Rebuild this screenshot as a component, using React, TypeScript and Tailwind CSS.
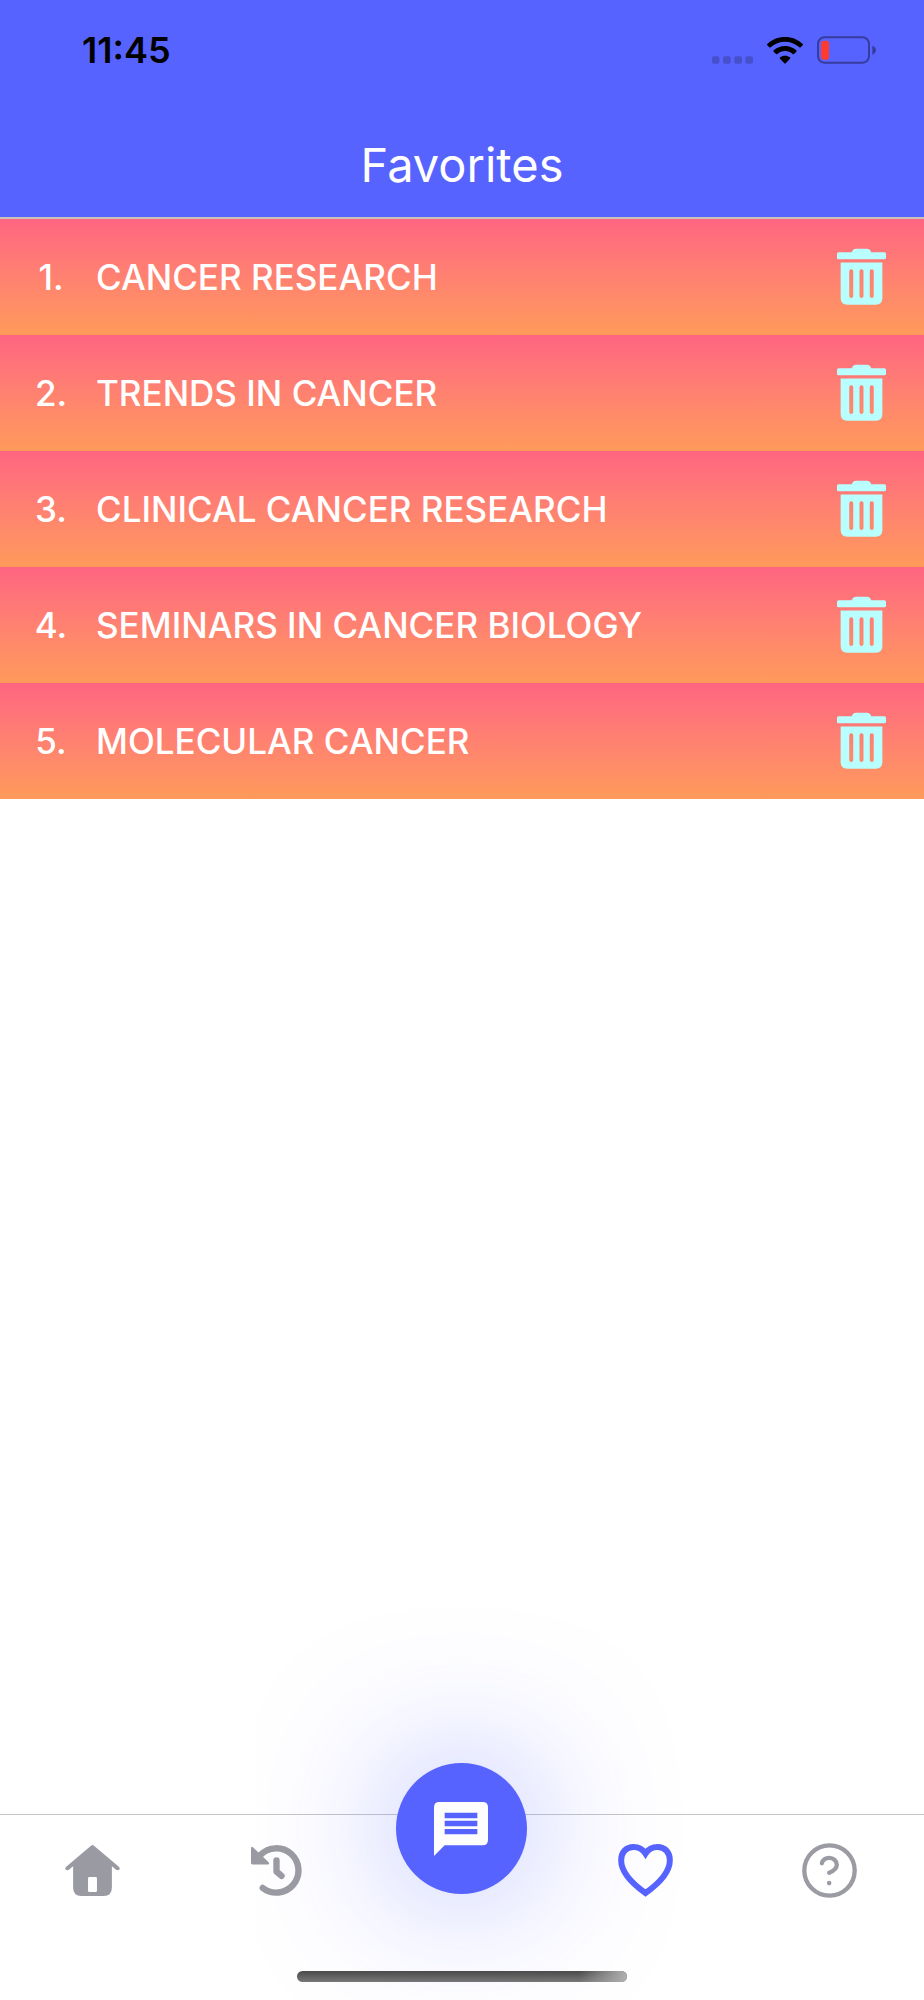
import React from 'react';

const favorites = [
  'CANCER RESEARCH',
  'TRENDS IN CANCER',
  'CLINICAL CANCER RESEARCH',
  'SEMINARS IN CANCER BIOLOGY',
  'MOLECULAR CANCER'
];

const SignalIcon: React.FC = () => (
  <svg aria-hidden="true" viewBox="0 0 123 22" className="w-[41px] h-2 fill-[#4650cb]">
    <rect x="0" width="22" height="22" rx="6" />
    <rect x="33" width="23" height="22" rx="6" />
    <rect x="67" width="23" height="22" rx="6" />
    <rect x="100" width="23" height="22" rx="6" />
  </svg>
);

const WifiIcon: React.FC = () => (
  <svg aria-hidden="true" viewBox="0 0 108 81" className="w-9 h-[27px] fill-black">
    <path d="M54 0C75 0 94 8 107 21Q109 23 107 25L101 31Q99 33 97 31C85 20 70 14 54 14S23 20 11 31Q9 33 7 31L1 25Q-1 23 1 21C14 8 33 0 54 0Z" />
    <path d="M54 27C67 27 79 32 88 40Q90 42 88 44L81 51Q79 53 77 51C71 45 63 42 54 42S37 45 31 51Q29 53 27 51L20 44Q18 42 20 40C29 32 41 27 54 27Z" />
    <path d="M54 56C60 56 65 58 69 61Q71 63 69 65L56 79Q54 81 52 79L39 65Q37 63 39 61C43 58 48 56 54 56Z" />
  </svg>
);

const BatteryIcon: React.FC = () => (
  <svg aria-hidden="true" viewBox="0 0 177 82" className="w-[59px] h-7">
    <rect x="3" y="3" width="153" height="76" rx="19" fill="none" stroke="#363d9c" strokeWidth="6" />
    <rect x="12" y="13" width="24" height="57" rx="9" fill="#ff3b30" />
    <path d="M166 28C173 30 177 35 177 41S173 53 166 55Z" fill="#363d9c" />
  </svg>
);

const TrashIcon: React.FC = () => (
  <svg aria-hidden="true" viewBox="0 0 148 170" className="w-[49px] h-[57px] fill-[#b9ffff]">
    <path d="M5 12H45Q47 1 58 1H90Q101 1 103 12H143Q148 12 148 17V29Q148 33 143 33H5Q0 33 0 29V17Q0 12 5 12Z" />
    <path
      fillRule="evenodd"
      d="M11 43H137V150Q137 170 117 170H31Q11 170 11 150ZM37 69V144A6 6 0 0 0 49 144V69A6 6 0 0 0 37 69ZM68 69V144A6 6 0 0 0 80 144V69A6 6 0 0 0 68 69ZM99 69V144A6 6 0 0 0 111 144V69A6 6 0 0 0 99 69Z"
    />
  </svg>
);

const HomeIcon: React.FC = () => (
  <svg aria-hidden="true" viewBox="0 0 165 154" className="w-[55px] h-[51px] fill-[#9a9aa2]">
    <path
      fillRule="evenodd"
      d="M78 2Q82.500 -2 87 2L162 66Q167 71 163 75Q159 78 154 75L141 64V129Q141 154 116 154H49Q24 154 24 129V64L11 75Q6 78 2 75Q-2 71 3 66ZM73 97Q69 97 69 101V138Q69 142 73 142H92Q96 142 96 138V101Q96 97 92 97Z"
    />
  </svg>
);

const HistoryIcon: React.FC = () => (
  <svg aria-hidden="true" viewBox="0 0 152 152" className="w-[51px] h-[51px]">
    <g fill="none" stroke="#9a9aa2" strokeLinecap="round" strokeLinejoin="round">
      <path d="M28 30A66 66 0 1 1 35 128" strokeWidth="19" />
      <path d="M76 46V79L91 92" strokeWidth="19" />
    </g>
    <path d="M0 10Q0 2 6 7L52 51Q57 58 50 58H4Q0 58 0 54Z" fill="#9a9aa2" />
  </svg>
);

const ChatIcon: React.FC = () => (
  <svg aria-hidden="true" viewBox="0 0 162 162" className="w-[54px] h-[54px]">
    <path
      fill="#fdfdfd"
      fillRule="evenodd"
      d="M16 0H146Q162 0 162 16V114Q162 130 146 130H32L0 162V16Q0 0 16 0ZM32 32V49H130V32ZM32 56V73H130V56ZM32 81V97H130V81Z"
    />
  </svg>
);

const HeartIcon: React.FC = () => (
  <svg aria-hidden="true" viewBox="0 0 165 160" className="w-[55px] h-[53px]">
    <path
      d="M82.500 29C75 17 63 9 46 9C24 9 9 25 9 49C9 88 46 122 82.500 148C119 122 156 88 156 49C156 25 141 9 119 9C102 9 90 17 82.500 29Z"
      fill="none"
      stroke="#5663ff"
      strokeWidth="18"
    />
  </svg>
);

const HelpIcon: React.FC = () => (
  <svg aria-hidden="true" viewBox="0 0 166 166" className="w-[55px] h-[55px]">
    <g fill="none" stroke="#9a9ba3" strokeWidth="13" strokeLinecap="round">
      <circle cx="83" cy="83" r="76" />
      <path d="M60 61C63 51 71 45 82 45C95 45 105 54 105 66C105 80 92 86 82 90" />
    </g>
    <circle cx="82" cy="121" r="7" fill="#9a9ba3" />
  </svg>
);

const tabs = [
  { label: 'Home', icon: <HomeIcon /> },
  { label: 'History', icon: <HistoryIcon /> },
  { label: 'Chat', icon: <ChatIcon />, primary: true },
  { label: 'Favorites', icon: <HeartIcon />, active: true },
  { label: 'Help', icon: <HelpIcon /> }
];

const Header: React.FC = () => (
  <header className="bg-[#5663ff] border-b-2 border-[#c9c3c0]">
    <div className="h-[100px] pl-[82px] pr-12 flex items-center justify-between">
      <time className="text-[36px] leading-10 font-semibold text-black">11:45</time>
      <div className="flex items-center gap-3.5">
        <div className="h-7 flex items-end">
          <SignalIcon />
        </div>
        <WifiIcon />
        <BatteryIcon />
      </div>
    </div>
    <div className="h-[117px] pt-3 flex items-center justify-center">
      <h1 className="text-[47px] leading-14 font-normal text-white">Favorites</h1>
    </div>
  </header>
);

const TabBar: React.FC = () => (
  <footer className="border-t border-[#c6c6c9]">
    <nav aria-label="Main" className="h-[110px] pr-0.5 flex">
      {tabs.map((tab) => (
        <div key={tab.label} className="flex-1 flex justify-center items-center">
          {tab.primary ? (
            <button
              type="button"
              aria-label={tab.label}
              className="self-start shrink-0 -mt-[52px] w-[131px] h-[131px] rounded-full bg-[#5663ff] flex items-center justify-center shadow-[0_0_140px_rgba(86,99,255,0.5)]"
            >
              {tab.icon}
            </button>
          ) : (
            <button type="button" aria-label={tab.label} aria-current={tab.active ? 'page' : undefined} className="relative">
              {tab.icon}
            </button>
          )}
        </div>
      ))}
    </nav>
    <div className="relative mx-auto mt-[46px] mb-[18px] w-[330px] h-[11px] rounded-full overflow-hidden bg-linear-to-b from-[#4a4a4a] to-[#787878]">
      <div className="ml-auto w-12 h-full bg-linear-to-r from-transparent to-[#b0b0b0]" />
    </div>
  </footer>
);

export default function App() {
  return (
    <div className="min-h-screen flex flex-col overflow-hidden bg-white font-[Inter,sans-serif]">
      <Header />
      <main className="flex-1">
        <ol>
          {favorites.map((title, index) => (
            <li
              key={title}
              className="h-[116px] pl-6 pr-[38px] flex items-center gap-[18px] bg-linear-to-b from-[#ff6581] to-[#ff9a5a] text-white text-[35px] leading-10 font-medium"
            >
              <span className="w-[54px] text-center">{index + 1}.</span>
              <span className="flex-1">{title}</span>
              <button type="button" aria-label={`Remove ${title}`} className="mb-0.5">
                <TrashIcon />
              </button>
            </li>
          ))}
        </ol>
      </main>
      <TabBar />
    </div>
  );
}
